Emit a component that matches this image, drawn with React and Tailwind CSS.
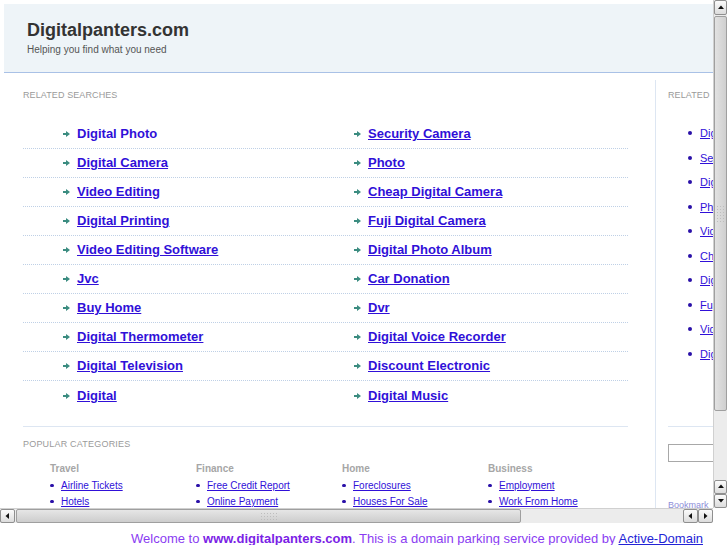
import React from 'react';

const leftLinks = ['Digital Photo', 'Digital Camera', 'Video Editing', 'Digital Printing', 'Video Editing Software', 'Jvc', 'Buy Home', 'Digital Thermometer', 'Digital Television', 'Digital'];
const rightLinks = ['Security Camera', 'Photo', 'Cheap Digital Camera', 'Fuji Digital Camera', 'Digital Photo Album', 'Car Donation', 'Dvr', 'Digital Voice Recorder', 'Discount Electronic', 'Digital Music'];
const sideLinks = ['Digital Photo', 'Security Camera', 'Digital Camera', 'Photo', 'Video Editing', 'Cheap Digital Camera', 'Digital Printing', 'Fuji Digital Camera', 'Video Editing Software', 'Digital Photo Album'];

const categories = [
  { title: 'Travel', items: ['Airline Tickets', 'Hotels'] },
  { title: 'Finance', items: ['Free Credit Report', 'Online Payment'] },
  { title: 'Home', items: ['Foreclosures', 'Houses For Sale'] },
  { title: 'Business', items: ['Employment', 'Work From Home'] },
];

const Arrow = () => (
  <svg width="7" height="6" viewBox="0 0 7 6" className="shrink-0">
    <path d="M0 2h3V0l4 3-4 3V4H0z" fill="#3b8c80" />
  </svg>
);

const Tri = ({ dir }) => {
  const d = {
    up: 'M1 5L4 1.5L7 5z',
    down: 'M1 2L4 5.5L7 2z',
    left: 'M5 1L1.5 4L5 7z',
    right: 'M2 1L5.5 4L2 7z',
  }[dir];
  return (
    <svg width="8" height="8" viewBox="0 0 8 8">
      <path d={d} fill="#111" />
    </svg>
  );
};

const ScrollBtn = ({ dir, className }) => (
  <div className={`flex items-center justify-center border border-[#8f8f8f] rounded-[2px] bg-gradient-to-b from-[#fbfbfb] to-[#dcdcdc] ${className}`}>
    <Tri dir={dir} />
  </div>
);

const Grip = ({ vertical }) => (
  <div className={`grid ${vertical ? 'grid-cols-3' : 'grid-cols-6'} gap-[2px]`}>
    {Array.from({ length: 18 }).map((_, i) => (
      <div key={i} className="w-[1px] h-[1px] bg-[#bdbdbd]" />
    ))}
  </div>
);

const RelatedRow = ({ a, b, last, first }) => (
  <div className={`flex h-[29px] items-center ${last ? '' : 'border-b border-dotted border-[#bfd0e6]'}`}>
    <div className="w-[291px] pl-[40px] flex items-center gap-[7px]">
      <Arrow />
      <a className={`text-[13px] font-bold text-[#3010d8] ${first ? 'no-underline' : 'underline'}`}>{a}</a>
    </div>
    <div className="flex-1 pl-[40px] flex items-center gap-[7px]">
      <Arrow />
      <a className="text-[13px] font-bold text-[#3010d8] underline">{b}</a>
    </div>
  </div>
);

export default function App() {
  return (
    <div className="w-[727px] h-[545px] overflow-hidden bg-white font-['Liberation_Sans',Arial,sans-serif]">
      {/* framed page */}
      <div className="flex h-[508px]">
        <div className="flex-1 overflow-hidden pt-[4px] pl-[4px]">
          <div className="h-[69px] bg-[#eef4f8] border-b border-[#a9c1e6] pt-[15px] pl-[23px] w-[720px]">
            <div className="text-[18px] leading-[22px] font-bold text-[#333]">Digitalpanters.com</div>
            <div className="text-[10px] leading-[12px] text-[#555] mt-[3px]">Helping you find what you need</div>
          </div>

          <div className="flex">
            <div className="w-[651px] shrink-0 pl-[19px] pt-[17px]">
              <div className="text-[9px] leading-[11px] tracking-[0.1px] text-[#9a9a9a]">RELATED SEARCHES</div>
              <div className="w-[605px] mt-[19px]">
                {leftLinks.map((l, i) => (
                  <RelatedRow key={l + i} a={l} b={rightLinks[i]} first={i === 0} last={i === leftLinks.length - 1} />
                ))}
              </div>
              <div className="w-[605px] mt-[16px] border-t border-[#dde6f2]" />
              <div className="text-[9px] leading-[11px] tracking-[0.2px] text-[#9a9a9a] mt-[12px]">POPULAR CATEGORIES</div>
              <div className="flex pl-[27px] mt-[13px]">
                {categories.map((c) => (
                  <div key={c.title} className="w-[146px] shrink-0">
                    <div className="text-[10px] leading-[12px] font-bold text-[#a6a6a6]">{c.title}</div>
                    <div className="mt-[2px]">
                      {c.items.map((it) => (
                        <div key={it} className="flex items-center h-[16px] gap-[7px]">
                          <div className="w-[4px] h-[3px] rounded-full bg-[#2a10a8]" />
                          <a className="text-[10px] text-[#3010d8] underline">{it}</a>
                        </div>
                      ))}
                    </div>
                  </div>
                ))}
              </div>
            </div>

            <div className="flex-1 mt-[7px] border-l border-[#dde6f2] pl-[12px] pt-[10px] min-h-[440px]">
              <div className="text-[9px] leading-[11px] tracking-[0.1px] text-[#9a9a9a] whitespace-nowrap">RELATED</div>
              <div className="mt-[20px] pl-[20px]">
                {sideLinks.map((s) => (
                  <div key={s} className="flex items-center h-[24.5px] gap-[8px] whitespace-nowrap">
                    <div className="w-[4px] h-[4px] rounded-full bg-[#2a10a8] shrink-0" />
                    <a className="text-[11px] text-[#3010d8] underline">{s}</a>
                  </div>
                ))}
              </div>
              <div className="mt-[60px] border-t border-[#dde6f2] w-[80px]" />
              <div className="mt-[17px] h-[18px] w-[80px] border border-[#a8a8a8] bg-white" />
              <div className="mt-[37px] text-[9px] text-[#8d8ed8]">Bookmark</div>
            </div>
          </div>
        </div>

        {/* vertical scrollbar */}
        <div className="w-[14px] shrink-0 flex flex-col bg-[#ececec] border-l border-[#d0d0d0]">
          <ScrollBtn dir="up" className="h-[15px]" />
          <div className="h-[395px] mt-[1px] border border-[#9f9f9f] rounded-[2px] bg-gradient-to-r from-[#e2e2e2] to-[#cfcfcf] flex items-center justify-center">
            <Grip vertical />
          </div>
          <div className="flex-1" />
          <ScrollBtn dir="up" className="h-[14px]" />
          <ScrollBtn dir="down" className="h-[14px]" />
        </div>
      </div>

      {/* horizontal scrollbar */}
      <div className="flex h-[15px]">
        <div className="w-[713px] flex bg-[#ececec] border-t border-[#d0d0d0]">
          <ScrollBtn dir="left" className="w-[15px]" />
          <div className="w-[505px] ml-[1px] border border-[#9f9f9f] rounded-[2px] bg-gradient-to-b from-[#e6e6e6] to-[#cdcdcd] flex items-center justify-center">
            <Grip />
          </div>
          <div className="flex-1" />
          <ScrollBtn dir="left" className="w-[15px]" />
          <ScrollBtn dir="right" className="w-[15px]" />
        </div>
        <div className="flex-1 bg-white" />
      </div>

      {/* footer */}
      <div className="pl-[131px] pt-[8px] text-[13px] leading-[16px] whitespace-nowrap text-[#8a3cf2]">
        Welcome to <span className="font-bold text-[#7a22e6]">www.digitalpanters.com</span>. This is a domain parking service provided by{' '}
        <a className="text-[#2323d6] underline">Active-Domain</a>
      </div>
    </div>
  );
}
